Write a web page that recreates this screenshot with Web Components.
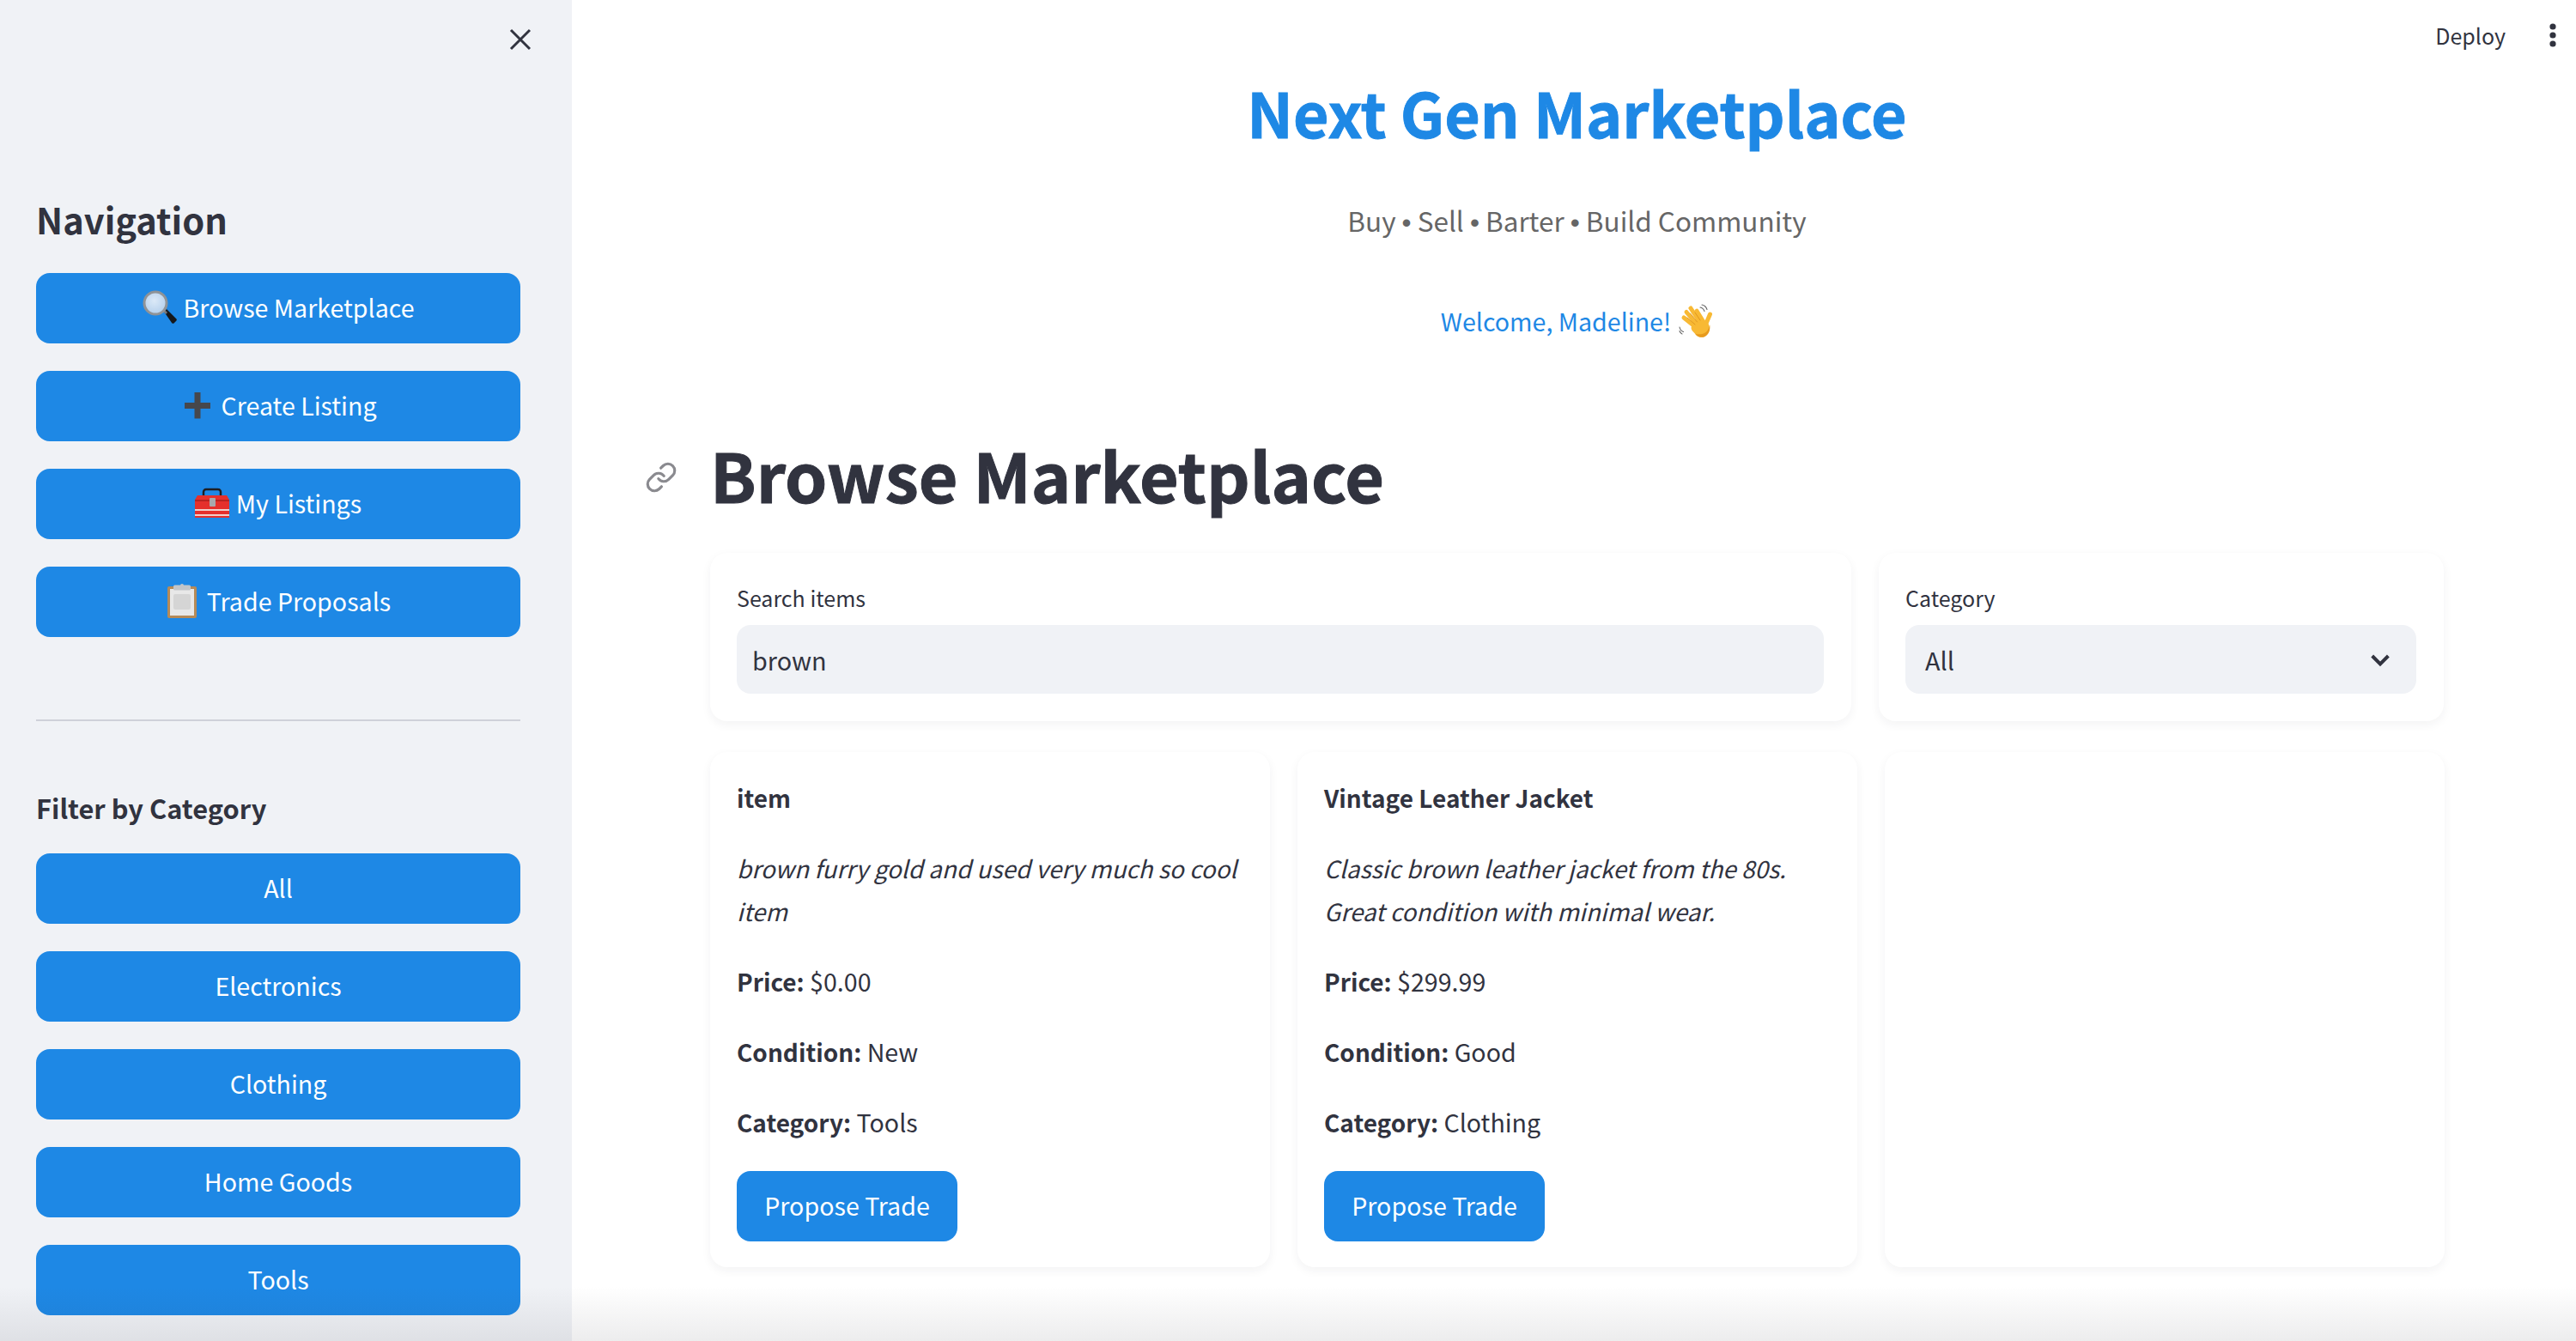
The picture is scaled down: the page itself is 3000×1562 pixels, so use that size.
<!DOCTYPE html>
<html lang="en">
<head>
<meta charset="utf-8">
<title>Next Gen Marketplace</title>
<style>
html,body{margin:0;height:100%;overflow:hidden;background:#fff}
body{font-family:"Noto Sans CJK SC","Source Sans Pro","Noto Sans",sans-serif;color:#31333f;font-size:28.6px}
.dot{font-family:"Liberation Sans",sans-serif}
</style>
</head>
<body>
<template id="t-app">
<style>
:host{display:flex;width:3000px;height:1562px;position:relative;overflow:hidden}
.fade{position:absolute;left:0;right:0;bottom:0;height:64px;pointer-events:none;background:linear-gradient(to bottom,rgba(40,40,50,0),rgba(40,40,50,.085))}
</style>
<slot name="side"></slot><slot></slot><div class="fade"></div>
</template>

<template id="t-sidebar">
<style>
:host{display:block;flex:0 0 666px;box-sizing:border-box;height:1562px;background:#f0f2f6;padding:0 60px 0 42px}
.top{height:92px;display:flex;justify-content:flex-end;align-items:center;margin-right:-14px}
.top svg{display:block}
</style>
<div class="top"><svg width="28" height="28" viewBox="0 0 28 28" fill="none" stroke="#31333f" stroke-width="3"><path d="M3 3 25 25M25 3 3 25"/></svg></div>
<slot></slot>
</template>

<template id="t-heading">
<style>
:host{display:block;font-weight:700;color:#31333f}
:host([level="nav"]){font-size:41.6px;line-height:60px;margin:133px 0 33px}
:host([level="filter"]){font-size:30.8px;line-height:48px;margin:77px 0 29px}
</style><slot></slot>
</template>

<template id="t-btn">
<style>
:host{display:flex;align-items:center;justify-content:center;gap:8px;box-sizing:border-box;height:82px;padding-bottom:2px;background:#1e88e5;color:#fff;border-radius:16px;font-size:28.6px;line-height:38px;white-space:nowrap}
:host([block]){width:100%;margin-bottom:32px}
:host([inline]){display:inline-flex;width:257px}
::slotted(svg){display:block;flex:none}
</style><slot name="icon"></slot><span><slot></slot></span>
</template>

<template id="t-divider">
<style>:host{display:block;height:2px;background:#cfd1d9;margin:96px 0 0}</style>
</template>

<template id="t-main">
<style>
:host{display:block;flex:1;min-width:0;height:1562px}
.bar{height:84px;display:flex;justify-content:flex-end;align-items:center;font-size:25px;color:#31333f;box-sizing:border-box;padding:0 20px 2px 0}
.bar span{margin-right:48px}
.bar svg{display:block}
.col{margin-left:161px;width:2019px}
</style>
<div class="bar"><span>Deploy</span><svg width="14" height="32" viewBox="0 0 14 32" fill="#31333f"><circle cx="7" cy="6" r="3.6"/><circle cx="7" cy="16" r="3.6"/><circle cx="7" cy="26" r="3.6"/></svg></div>
<div class="col"><slot></slot></div>
</template>

<template id="t-hero">
<style>
:host{display:block;text-align:center}
.title{font-size:71.6px;line-height:100px;font-weight:700;color:#1e88e5;margin-top:-4px;-webkit-text-stroke:.9px #1e88e5}
.sub{font-size:31.5px;line-height:48px;color:#666;margin-top:52px}
.welcome{display:flex;justify-content:center;align-items:center;gap:9px;font-size:28.6px;line-height:44px;color:#1e88e5;margin-top:69px}
.welcome svg{display:block;flex:none}
</style>
<div class="title"><slot name="title"></slot></div>
<div class="sub"><slot name="sub"></slot></div>
<div class="welcome"><span><slot name="welcome"></slot></span><svg width="40" height="40" viewBox="0 0 40 40">
<g fill="none" stroke="#666" stroke-width="1.100" stroke-linecap="round"><path d="M25 4c2.500.5 4 2 5 4.500M27 1c3 .5 5 2.500 6 5.500M1 27c.5 2.500 2 4.500 4.500 5.500M1 31.500c.5 1.500 1.500 3 3 3.500"/></g>
<g stroke="#f8b934" stroke-linecap="round" fill="none"><path d="M21 28 6 16" stroke-width="5"/><path d="M22 25 9 9.500" stroke-width="5"/><path d="M25 22 14 5" stroke-width="5"/><path d="M29 21 21 8" stroke-width="4.800"/><path d="M31 25 36.500 12" stroke-width="5"/></g>
<path d="M15 26C18 20 27 16 32 20 37 24 37 32 33 36 29 40 23 39.500 20 36 18 33 13 30 15 26z" fill="#f8b934"/>
<path d="M19 34.500c3 5 10 6 14 1.500 3-3 4-8 3-12-.5 5-3 9-7 10.500-3.500 1.300-7 1-10 0z" fill="#e79a1d"/>
<g stroke="#d98e1a" stroke-width=".8" stroke-linecap="round" fill="none"><path d="M10 16l9 8M13.500 11l8 10M19 10l6 9"/></g>
</svg></div>
</template>

<template id="t-section">
<style>
:host{display:block}
.h{display:flex;align-items:center;margin:94px 0 0 -76px;height:124px;font-size:78.800px;line-height:124px;font-weight:700;color:#31333f;white-space:nowrap;-webkit-text-stroke:1px #31333f}
.h svg{display:block;flex:none;margin:8px 38px 0 0}
.rows{display:flex;flex-direction:column;gap:36px;margin-top:30px}
</style>
<div class="h"><svg width="38" height="38" viewBox="0 0 24 24" fill="none" stroke="#8a8a8f" stroke-width="2" stroke-linecap="round" stroke-linejoin="round"><path d="M10 13a5 5 0 0 0 7.54.54l3-3a5 5 0 0 0-7.07-7.07l-1.72 1.71"/><path d="M14 11a5 5 0 0 0-7.54-.54l-3 3a5 5 0 0 0 7.07 7.07l1.71-1.71"/></svg><span><slot name="title"></slot></span></div>
<div class="rows"><slot></slot></div>
</template>

<template id="t-row">
<style>
:host{display:grid;gap:32px}
:host([kind="filters"]){grid-template-columns:1329px 658px}
:host([kind="items"]){grid-template-columns:repeat(3,652px)}
</style><slot></slot>
</template>

<template id="t-card">
<style>
:host{display:block;box-sizing:border-box;background:#fff;border-radius:20px;box-shadow:0 4px 12px rgba(30,30,50,.055);padding:32px 32px 32px 31px}
:host([kind="filter"]){height:196px}
:host([kind="item"]){height:600px;padding:28px 16px 32px 31px}
</style><slot></slot>
</template>

<template id="t-field">
<style>
:host{display:block}
.l{font-size:25px;line-height:40px;color:#31333f;margin-bottom:12px}
.b{height:80px;box-sizing:border-box;background:#f0f2f6;border-radius:16px;display:flex;align-items:center;justify-content:space-between;font-size:28.8px;color:#31333f}
:host([type="text"]) .b{padding:0 18px}
:host([type="select"]) .b{padding:0 26px 0 23px}
svg{display:block}
:host([type="text"]) svg{display:none}
</style>
<div class="l"><slot name="label"></slot></div>
<div class="b"><span><slot></slot></span><svg width="32" height="32" viewBox="0 0 24 24" fill="none" stroke="#31333f" stroke-width="3"><path d="M5 9l7 7 7-7"/></svg></div>
</template>

<template id="t-item">
<style>
:host{display:block;font-size:28.6px;line-height:50px;color:#31333f}
p{margin:0 0 32px}
.t{font-weight:700;font-size:28px;margin-bottom:32px}
.d{font-style:italic;font-size:27.9px}
</style>
<p class="t"><slot name="name"></slot></p>
<p class="d"><slot name="desc"></slot></p>
<slot></slot>
</template>

<template id="t-fact">
<style>
:host{display:block;line-height:50px;margin-bottom:32px}
b{font-weight:700;font-size:28px}
</style><b><slot name="k"></slot></b> <slot></slot>
</template>

<mk-app>
  <mk-sidebar slot="side">
    <mk-heading level="nav">Navigation</mk-heading>
    <mk-btn block><svg slot="icon" width="40" height="40" viewBox="0 0 40 40"><defs><radialGradient id="gl" cx=".45" cy=".4" r=".6"><stop offset="0" stop-color="#dbe9f7"/><stop offset="1" stop-color="#b5d0ec"/></radialGradient></defs><path d="M25 25l3-3 11 11a2 2 0 0 1 0 3l-2 2a2 2 0 0 1-3 0z" fill="#15171a"/><path d="M23 24l2-2 4 4-2 2z" fill="#77797d"/><circle cx="15" cy="15" r="13" fill="url(#gl)" stroke="#8f9397" stroke-width="3"/></svg>Browse Marketplace</mk-btn>
    <mk-btn block><svg slot="icon" width="40" height="40" viewBox="0 0 40 40"><path d="M17.500 5h7v12h11.500v7H24.500v11.500h-7V24H6v-7h11.500z" fill="#46474c"/></svg>Create Listing</mk-btn>
    <mk-btn block><svg slot="icon" width="40" height="40" viewBox="0 0 40 40"><path d="M10 11V7a3 3 0 0 1 3-3h14a3 3 0 0 1 3 3v4" fill="none" stroke="#1e1e22" stroke-width="2.500"/><path d="M3 11h34l3 5v21H0V16z" fill="#e5302c"/><path d="M0 27h40v2H0zM0 33h40v2H0z" fill="#f0d0cc"/><path d="M0 16h40v2H0z" fill="#b82320"/><rect x="17" y="14" width="7" height="10" rx="1" fill="#a9a9ad"/></svg>My Listings</mk-btn>
    <mk-btn block><svg slot="icon" width="40" height="40" viewBox="-1 0 40 40"><rect x="1" y="3" width="34" height="37" rx="2" fill="#b58a58"/><rect x="4" y="6" width="28" height="31" fill="#e8e8e8"/><rect x="8" y="12" width="20" height="18" rx="2" fill="#d5d5d5"/><rect x="8" y="1.500" width="20" height="6" rx="1.500" fill="#c2c5c9"/><circle cx="18" cy="2" r="2" fill="#c2c5c9"/></svg>Trade Proposals</mk-btn>
    <mk-divider></mk-divider>
    <mk-heading level="filter">Filter by Category</mk-heading>
    <mk-btn block>All</mk-btn>
    <mk-btn block>Electronics</mk-btn>
    <mk-btn block>Clothing</mk-btn>
    <mk-btn block>Home Goods</mk-btn>
    <mk-btn block>Tools</mk-btn>
  </mk-sidebar>
  <mk-main>
    <mk-hero>
      <span slot="title">Next Gen Marketplace</span>
      <span slot="sub">Buy <span class="dot">•</span> Sell <span class="dot">•</span> Barter <span class="dot">•</span> Build Community</span>
      <span slot="welcome">Welcome, Madeline!</span>
    </mk-hero>
    <mk-section>
      <span slot="title">Browse Marketplace</span>
      <mk-row kind="filters">
        <mk-card kind="filter"><mk-field type="text"><span slot="label">Search items</span>brown</mk-field></mk-card>
        <mk-card kind="filter"><mk-field type="select"><span slot="label">Category</span>All</mk-field></mk-card>
      </mk-row>
      <mk-row kind="items">
        <mk-card kind="item"><mk-item>
          <span slot="name">item</span>
          <span slot="desc">brown furry gold and used very much so cool item</span>
          <mk-fact><span slot="k">Price:</span>$0.00</mk-fact>
          <mk-fact><span slot="k">Condition:</span>New</mk-fact>
          <mk-fact><span slot="k">Category:</span>Tools</mk-fact>
          <mk-btn inline>Propose Trade</mk-btn>
        </mk-item></mk-card>
        <mk-card kind="item"><mk-item>
          <span slot="name">Vintage Leather Jacket</span>
          <span slot="desc">Classic brown leather jacket from the 80s. Great condition with minimal wear.</span>
          <mk-fact><span slot="k">Price:</span>$299.99</mk-fact>
          <mk-fact><span slot="k">Condition:</span>Good</mk-fact>
          <mk-fact><span slot="k">Category:</span>Clothing</mk-fact>
          <mk-btn inline>Propose Trade</mk-btn>
        </mk-item></mk-card>
        <mk-card kind="item"></mk-card>
      </mk-row>
    </mk-section>
  </mk-main>
</mk-app>
<script>
const defs={'mk-app':'t-app','mk-sidebar':'t-sidebar','mk-heading':'t-heading','mk-btn':'t-btn','mk-divider':'t-divider','mk-main':'t-main','mk-hero':'t-hero','mk-section':'t-section','mk-row':'t-row','mk-card':'t-card','mk-field':'t-field','mk-item':'t-item','mk-fact':'t-fact'};
for(const [name,id] of Object.entries(defs)){
  customElements.define(name,class extends HTMLElement{
    constructor(){super();this.attachShadow({mode:'open'}).appendChild(document.getElementById(id).content.cloneNode(true));}
  });
}
</script>
</body>
</html>
